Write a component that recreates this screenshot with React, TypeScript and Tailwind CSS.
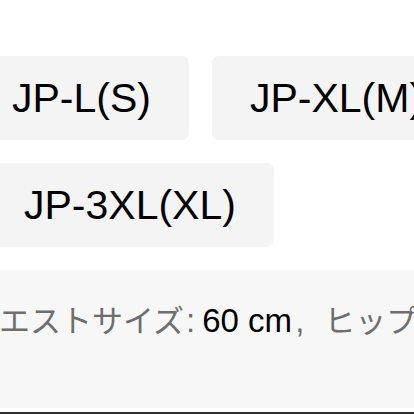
import React from 'react';

const sizes = [
    [
        { id: 'l', label: 'JP-L(S)' },
        { id: 'xl', label: 'JP-XL(M)' },
    ],
    [{ id: '3xl', label: 'JP-3XL(XL)' }],
];

function SizeChip({ label }: { label: string }) {
    return (
        <button className="h-[84px] shrink-0 px-[38px] rounded-[7px] bg-[#f4f4f4] text-[41px] leading-none text-black whitespace-nowrap font-['Liberation_Sans',Arial,sans-serif]">
            {label}
        </button>
    );
}

export default function App() {
    return (
        <div className="w-[414px] h-[414px] overflow-hidden bg-white flex flex-col">
            <div className="pt-[56px] flex flex-col gap-[23px]">
                {/* Size options */}
                <div className="flex gap-[23px] ml-[-26px]">
                    {sizes[0].map((s) => (
                        <SizeChip key={s.id} label={s.label} />
                    ))}
                </div>
                <div className="flex gap-[23px] ml-[-14px]">
                    {sizes[1].map((s) => (
                        <SizeChip key={s.id} label={s.label} />
                    ))}
                </div>

                {/* Measurements */}
                <div className="h-[138px] bg-[#f7f7f7] pt-[29px] overflow-hidden">
                    <div className="ml-[-32px] whitespace-nowrap leading-[40px] font-['Liberation_Sans','Noto_Sans_CJK_JP',sans-serif]">
                        <span className="text-[31px] text-[#6e6e6e] font-['Noto_Sans_CJK_JP',sans-serif]">ウエストサイズ</span>
                        <span className="text-[33px] text-[#6e6e6e] ml-[2px]">:</span>
                        <span className="text-[33px] text-black ml-[7px]">60 cm</span>
                        <span className="text-[33px] text-[#6e6e6e] ml-[3px]">,</span>
                        <span className="text-[31px] text-[#6e6e6e] ml-[20px] font-['Noto_Sans_CJK_JP',sans-serif]">ヒップサイズ:</span>
                    </div>
                </div>
            </div>
            <div className="mt-[4px] h-[2px] bg-[#2e2e2e]" />
        </div>
    );
}
